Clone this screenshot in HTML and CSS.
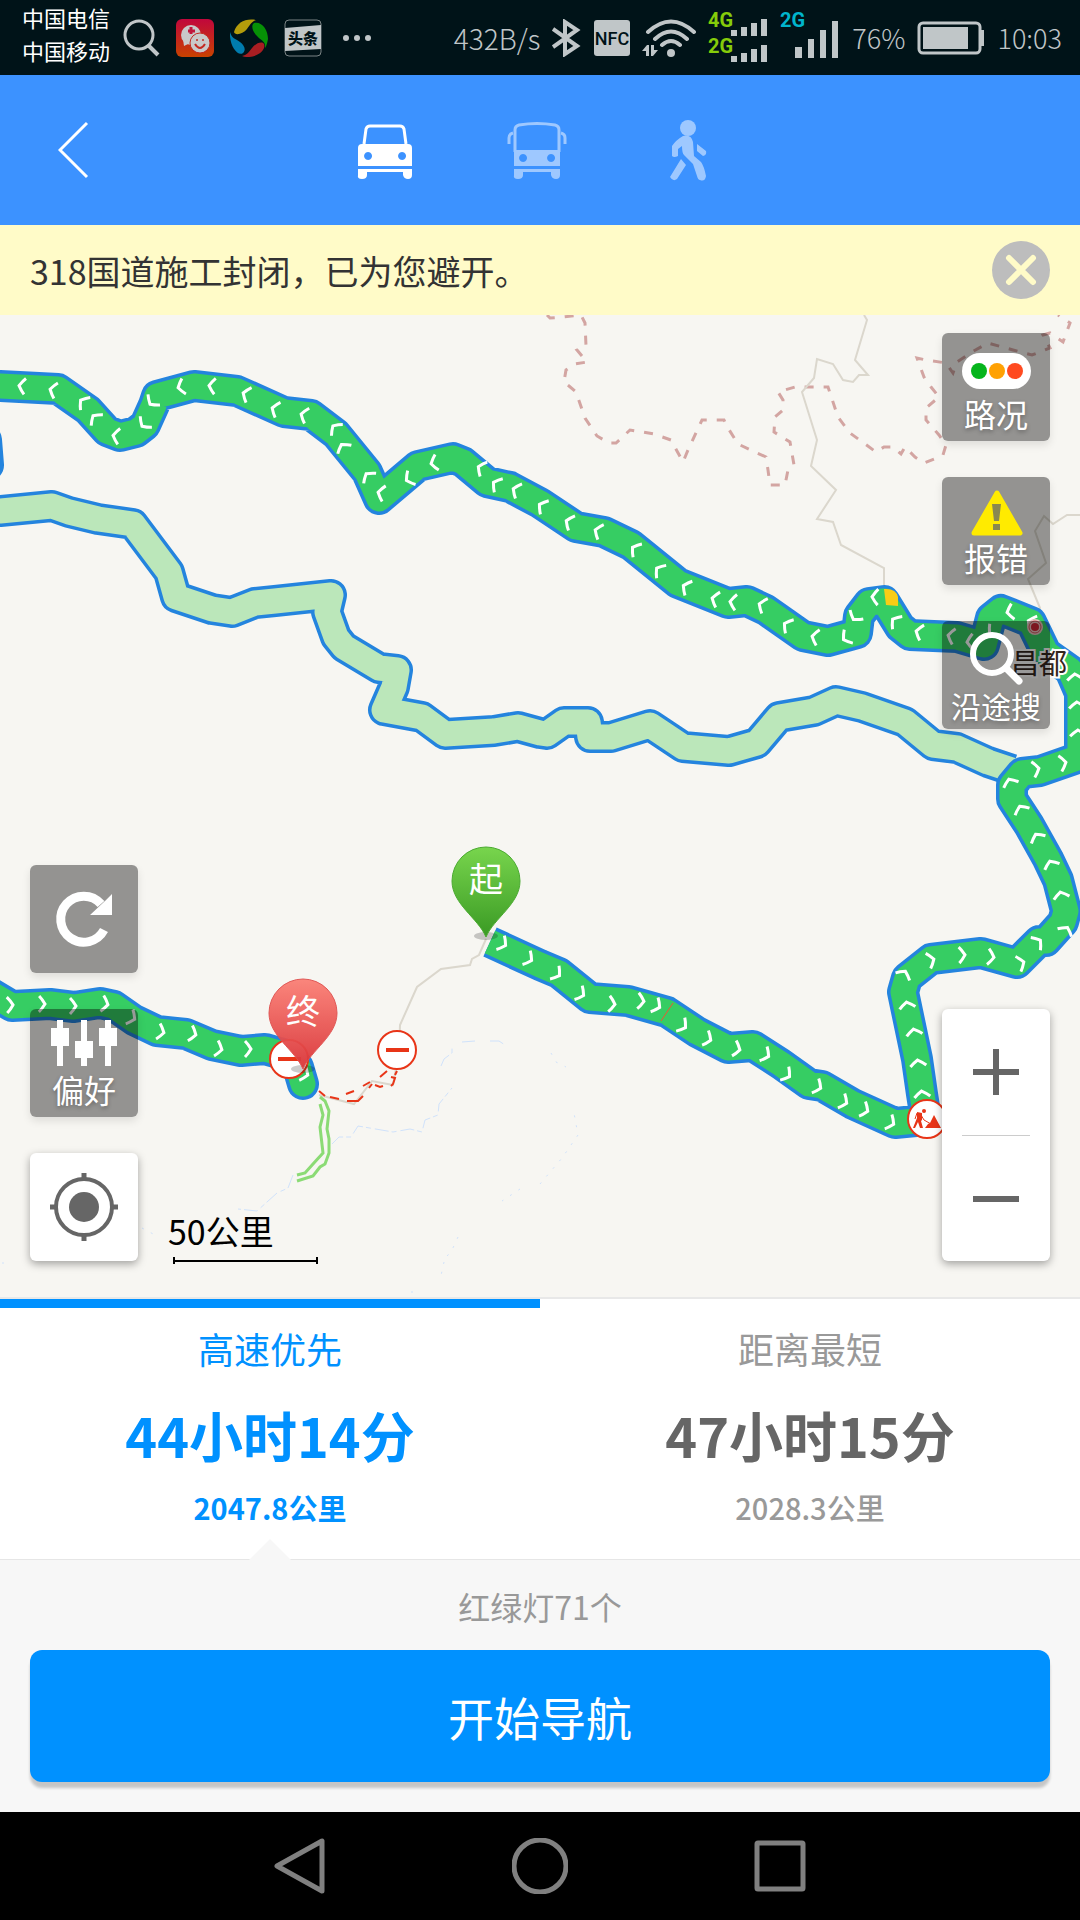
FILE: index.html
```html
<!DOCTYPE html>
<html lang="zh-CN">
<head>
    <meta charset="UTF-8">
    <meta name="viewport" content="width=device-width, initial-scale=1.0">
    <title>路线规划</title>
    <link rel="stylesheet" href="styles.css">
</head>
<body>
    <div class="status-bar">
        <div class="carriers">
            <div>中国电信</div>
            <div>中国移动</div>
        </div>
        <svg width="38" height="38" viewBox="0 0 38 38" fill="none" stroke="#c0c6c8" stroke-width="3">
            <circle cx="17" cy="16" r="14"/>
            <path d="M26 26l10 10" stroke-width="4"/>
        </svg>
        <svg width="38" height="38" viewBox="0 0 38 38">
            <defs>
                <linearGradient id="chatBg" x1="0" y1="0" x2="0" y2="1">
                    <stop offset="0" stop-color="#c1073c"/>
                    <stop offset="1" stop-color="#c84200"/>
                </linearGradient>
            </defs>
            <rect width="38" height="38" rx="6" fill="url(#chatBg)"/>
            <circle cx="15" cy="16" r="10" fill="#c9c9c9"/>
            <path d="M7 20l1 7 6-3z" fill="#c9c9c9"/>
            <path d="M15 8v7M12 12h7" stroke="#c1173c" stroke-width="3"/>
            <circle cx="24" cy="24" r="10" fill="#c9c9c9" stroke="#c32a22" stroke-width="1"/>
            <path d="M19 25q5 8 10 0" fill="none" stroke="#c32a22" stroke-width="2"/>
            <circle cx="21" cy="21" r="1" fill="#c32a22"/>
            <circle cx="27" cy="21" r="1" fill="#c32a22"/>
        </svg>
        <svg width="38" height="38" viewBox="0 0 38 38">
            <path d="M4 13C7 3 16 -1 26 1C21 3 20 6 17 10C13 15 5 17 4 13z" fill="#b39c0b"/>
            <path d="M24 4C32 2 38 11 38 20C37 25 36 28 35 29C36 22 31 22 27 17C22 12 21 6 24 4z" fill="#069106"/>
            <path d="M34 25C37 33 22 41 12 37C17 36 18 34 22 29C26 24 32 22 34 25z" fill="#a81e22"/>
            <path d="M13 34C8 38 -1 27 0 13C2 20 5 19 10 23C15 27 16 31 13 34z" fill="#007cae"/>
        </svg>
        <svg width="38" height="38" viewBox="0 0 38 38">
            <rect x="1" y="1" width="36" height="36" rx="4" fill="none" stroke="#7b8485"/>
            <path d="M1 9l36-3v24l-36 2z" fill="#c0c6c8"/>
            <text x="4" y="25" class="toutiao">头条</text>
        </svg>
        <svg width="38" height="38" viewBox="0 0 38 38" fill="#c0c6c8">
            <circle cx="8" cy="19" r="3"/>
            <circle cx="19" cy="19" r="3"/>
            <circle cx="30" cy="19" r="3"/>
        </svg>

        <span class="net-speed">432B/s</span>
        <svg width="30" height="38" viewBox="0 0 30 38" fill="none" stroke="#c0c6c8" stroke-width="4">
            <path d="M1 10l24 17-12 8V3l12 8L1 28"/>
        </svg>
        <svg width="36" height="36" viewBox="0 0 36 36">
            <rect width="36" height="36" rx="3" fill="#c0c6c8"/>
            <text x="18" y="25" text-anchor="middle" class="nfc">NFC</text>
        </svg>
        <svg width="54" height="38" viewBox="0 0 54 38" fill="none" stroke="#c0c6c8" stroke-width="4" stroke-linecap="round">
            <path d="M6 13Q29 -8 52 13M13 20Q29 5 45 20M20 26Q29 18 38 26"/>
            <circle cx="29" cy="34" r="4" fill="#c0c6c8" stroke="none"/>
            <path d="M0 32l5-6h2v11h-3v-5zM16 31l-5 6h-2v-11h3v5z" fill="#c0c6c8" stroke="none"/>
        </svg>
        <svg width="60" height="64" viewBox="0 -6 60 64">
            <text x="0" y="15" class="net four">4G</text>
            <text x="0" y="41" class="net four">2G</text>
            <path d="M23 18h6v6h-6zM33 15h6v9h-6zM43 11h6v13h-6zM53 7h6v17h-6zM23 44h6v6h-6zM33 41h6v9h-6zM43 37h6v13h-6zM53 33h6v17h-6z" fill="#c0c6c8"/>
        </svg>
        <svg width="60" height="64" viewBox="0 -6 60 64">
            <text x="0" y="15" class="net two">2G</text>
            <path d="M15 35h7v11h-7zM28 27h6v19h-6zM40 18h6v28h-6zM52 9h6v37h-6z" fill="#c0c6c8"/>
        </svg>
        <span>76%</span>
        <svg width="68" height="34" viewBox="0 0 68 34">
            <rect x="2" y="2" width="61" height="30" rx="4" fill="none" stroke="#c0c6c8" stroke-width="3"/>
            <path d="M6 6h45v22H6zM64 9h3v16h-3z" fill="#c0c6c8"/>
        </svg>
        <span>10:03</span>
    </div>

    <header class="top-bar">
        <button class="back" aria-label="返回">
            <svg width="32" height="58" viewBox="0 0 32 58" fill="none" stroke="#fff" stroke-width="3">
                <path d="M29 2L2 29l27 27"/>
            </svg>
        </button>
        <nav class="modes">
            <button class="mode active" aria-label="驾车">
                <svg width="60" height="60" viewBox="0 0 60 60" fill="#fff">
                    <path d="M9 24l2-15q1-3 4-3h30q3 0 4 3l2 15" fill="none" stroke="#fff" stroke-width="3"/>
                    <path fill-rule="evenodd" d="M7 24h46q4 0 4 4v18H3V28q0-4 4-4zM13 32a4 4 0 1 0 0.1 0zM47 32a4 4 0 1 0 0.1 0z"/>
                    <path d="M3 49h54v6q0 4-4 4t-5-4v-3H12v3q0 4-5 4t-4-4z"/>
                </svg>
            </button>
            <button class="mode" aria-label="公交">
                <svg width="60" height="60" viewBox="0 0 60 60" fill="#fff">
                    <path d="M8 32V10q0-4 4-5q18-3 36 0q4 1 4 5v22" fill="none" stroke="#fff" stroke-width="3"/>
                    <path d="M2 24v-6q0-4 4-5M58 24v-6q0-4-4-5" fill="none" stroke="#fff" stroke-width="3"/>
                    <path fill-rule="evenodd" d="M7 30h46v16H7zM16 34a4 4 0 1 0 0.1 0zM44 34a4 4 0 1 0 0.1 0z"/>
                    <path d="M7 49h46v6q0 4-4 4t-5-4v-3H16v3q0 4-5 4t-4-4z"/>
                </svg>
            </button>
            <button class="mode" aria-label="步行">
                <svg width="60" height="62" viewBox="0 0 60 62" fill="#fff">
                    <circle cx="29" cy="9" r="8"/>
                    <path d="M24 17q8-2 10 6l1 14 7 6q3 4 5 14q-1 6-6 4q-2 0-3-4l-4-12-9-9q-2-2-2-9l-4 3v7q-4 2-6 0V27q4-6 11-10z"/>
                    <path d="M38 25l9 7q1 4-3 5l-6-5zM22 40l5 6-9 14q-4 3-7-2z"/>
                </svg>
            </button>
        </nav>
    </header>

    <div class="notice">
        <span>318国道施工封闭，已为您避开。</span>
        <button aria-label="关闭">
            <svg width="58" height="58" viewBox="0 0 58 58">
                <circle cx="29" cy="29" r="29" fill="#bdbdbd"/>
                <path d="M17 17l24 24M41 17L17 41" stroke="#fffbc8" stroke-width="6" stroke-linecap="round"/>
            </svg>
        </button>
    </div>

    <main class="map">
        <svg class="map-canvas" viewBox="0 315 1080 982" preserveAspectRatio="xMidYMid slice" fill="none">
            <defs>
                <marker id="chevron" viewBox="-8 -10 16 20" markerWidth="16" markerHeight="20" markerUnits="userSpaceOnUse" orient="auto">
                    <path d="M-3 -8Q0 -5 3 0Q0 5 -3 8" fill="none" stroke="#fff" stroke-width="3"/>
                </marker>
                <linearGradient id="startFill" x1="0" y1="0" x2="0" y2="1">
                    <stop offset="0" stop-color="#78d54d"/>
                    <stop offset="1" stop-color="#3a9a24"/>
                </linearGradient>
                <linearGradient id="endFill" x1="0" y1="0" x2="0" y2="1">
                    <stop offset="0" stop-color="#fb8076"/>
                    <stop offset="1" stop-color="#da3438"/>
                </linearGradient>
                <path id="pin" d="M0 0C-8 -19 -34 -33 -34 -56A34 34 0 0 1 34 -56C34 -33 8 -19 0 0z"/>
                <path id="altRoute" d="M-20 512L0 511L52 506L69 512L98 519L133 524L169 572L176 597L212 609L232 612L255 603L275 601L331 595L327 612L336 637L344 647L379 668L397 670L394 687L384 710L422 717L445 734L494 731L518 727L540 733L547 734L564 722L588 722L590 737L611 737L650 725L683 747L729 751L757 743L779 717L814 711L836 701L862 707L905 722L933 745L957 748L988 762L1012 770"/>
                <path id="mainRoute" d="M490 942L540 965L559 973L590 998L628 1001L667 1012L697 1032L728 1048L753 1046L781 1064L809 1084L822 1086L853 1104L895 1123L926 1120L922 1094L917 1059L903 992L907 978L931 959L981 953L1017 963L1039 941L1046 941L1063 922L1066 911L1058 880L1048 859L1029 825L1012 799L1012 785L1022 773L1040 771L1080 757L1080 723L1080 693L1070 670L1046 653L1031 622L1001 610L991 618L984 645L957 637L910 635L900 627L884 601L869 603L859 616L857 633L828 641L803 636L766 610L747 601L728 603L678 583L631 545L604 532L576 527L540 503L510 487L487 482L463 462L453 458L418 466L379 499L367 472L336 434L311 415L284 412L237 391L194 386L157 396L154 405L145 425L136 432L120 436L107 431L88 410L58 389L0 386L-20 386"/>
                <path id="tailRoute" d="M-10 993L12 1006L50 1004L74 1007L100 1003L114 1006L134 1020L157 1031L186 1034L212 1045L241 1051L265 1049L286 1055L298 1067L303 1084"/>
            </defs>

            <!-- rivers -->
            <g stroke="#d0e2fb" stroke-width="1" stroke-dasharray="14 3 5 4">
                <path d="M293 1175l-5 13-11 5-20 18-19-2"/>
                <path d="M332 1144l7-7h12l7-11 35 6 17-3 12 3 3-12 13-5 1-11 13-16"/>
                <path d="M441 1066l3-7 8-6v-6M462 1042l13-1M490 1041h9l6 4"/>
            </g>
            <g stroke="#d0e2fb" stroke-width="1" stroke-dasharray="2 8">
                <path d="M540 1184l22-26 16-23-4-22M551 1053l5 9 10 5M520 1189l-18 12M458 1237l-6 13-8 10M444 1262l-4 18M412 1291v6M142 1228l15 8M2 1263h6"/>
            </g>

            <!-- province border -->
            <path stroke="#d3a5a2" stroke-width="3" stroke-dasharray="9 10" d="M547 315l3 3 13-1 18-2 4 8 1 23-9 4 10 12-12 2-9 6-2 12 5 4 7 6 9 26 12 18 12 7h7l14-13 24 4 17 6 12 22 5-12 14-30h22l4 8 10 16 19 9 9 4 2 13 2 15h15l3-15 6-5-4-23-16-10 1-15 8-7v-10l-5-8 17-5h33l10 30 12 16 26 19 8-5h9l8 7 4-7 10 10 9 6 10-4 9-4 3-10-7-10-13-15v-12l13-11-8-10-7-10-7-19 9 2 20 3 7 10 4-11 15-10 16-9 25 7 19 5 18-7-7-13 7-2 13 9 7-19-12-8"/>

            <!-- minor roads -->
            <g stroke="#dbd7cd" stroke-width="2">
                <path d="M864 315l3 5-12 40 13 15h-9l-6 7-10-2-10-16-16-5-3 19-12 14 15 48-6 26 25 24-19 29 16 3 8 23 43 23v30"/>
                <path d="M1080 515h-13l-14 9-9-8-9 15 11 32-18 16 12 29-1 10"/>
                <path d="M486 939l-7 16-7 4-2 6-29 4-24 18-17 38-1 27-6 33-21-4-18 23-35-9"/>
            </g>

            <g stroke="#e83518" stroke-width="2">
                <path d="M319 1091l6 5M330 1097l9 2M347 1101h11l5-5M369 1088l3-4M375 1085l5 2 3-1M391 1086l2-2 2-6-4-1M395 1075l2-4"/>
                <path d="M346 1094l8-3M363 1086l7-4M380 1077l7-6"/>
            </g>
            <g stroke="#8bdb75" stroke-width="3">
                <path d="M320 1097l5 4 4 10-2 18 2 10v14l-4 11-5 3-7 9-16 5"/>
                <path d="M320 1104l3 11-3 12 3 26-10 11-8 9-8 2"/>
            </g>

            <g stroke-linejoin="round">
                <path d="M-14 440L-12 465" stroke="#2484de" stroke-width="32" stroke-linecap="round"/>
                <use href="#altRoute" stroke="#2484de" stroke-width="32"/>
                <use href="#altRoute" stroke="#bbe7ba" stroke-width="25"/>
                <use href="#mainRoute" stroke="#2484de" stroke-width="32"/>
                <use href="#tailRoute" stroke="#2484de" stroke-width="32" stroke-linecap="round"/>
                <use href="#mainRoute" stroke="#36cd63" stroke-width="25"/>
                <use href="#tailRoute" stroke="#36cd63" stroke-width="25" stroke-linecap="round"/>
            </g>
            <path d="M884 589q12-1 14 8v9l-12-1z" fill="#f9cd15"/>
            <path d="M673 1003l-12 18" stroke="#ee5533" stroke-width="1"/>

            <!-- direction arrows along the route -->
            <g class="arrows">
                <polyline points="503,944 529,959 557,974 581,994 612,1004 641,1001 657,1006 683,1026 708,1039 737,1049 766,1055 787,1075 818,1087 844,1102 865,1110 891,1123"/>
                <polyline points="922,1094 918,1063 914,1032 907,1005 904,974 931,960 962,955 991,957 1021,963 1038,942 1066,930 1061,895 1051,864 1037,837 1021,809 1010,782"/>
                <polyline points="1036,769 1063,763"/>
                <polyline points="1078,733 1077,705 1075,677"/>
                <polyline points="1031,622 1010,612 992,632 970,642 951,636 919,632 895,621 875,597 855,617 846,638 815,637 787,625 762,605 733,602 715,599 686,587 659,570 635,549 598,531 569,522 542,506 516,490 496,484 481,468 434,463 409,479 381,493 368,476 343,447 335,428 304,415 275,409 246,394 212,386 181,387 152,402 144,424 116,436 95,418 83,402 53,390 22,386"/>
                <polyline points="10,1005 42,1004 73,1006 105,1004 132,1018 161,1032 193,1034 219,1049 248,1049"/>
                <polyline points="290,1068 305,1074"/>
            </g>

            <!-- city -->
            <circle cx="1035" cy="627" r="8" fill="#eac4c0"/>
            <circle cx="1035" cy="627" r="6" fill="none" stroke="#d0555c" stroke-width="1"/>
            <circle cx="1035" cy="627" r="4" fill="#cf2734"/>
            <text x="1011" y="674" class="city">昌都</text>

            <!-- closed roads and works -->
            <g fill="#fff" stroke="#e83518" stroke-width="2">
                <circle cx="397" cy="1050" r="19"/>
                <circle cx="289" cy="1059" r="19"/>
                <circle cx="927" cy="1119" r="19"/>
                <path d="M386 1050h23M278 1059h23" stroke-width="4"/>
            </g>
            <g fill="#e83518">
                <path d="M925 1128l3-4 2-1 4-8 7 13z"/>
                <circle cx="924" cy="1111" r="2"/>
                <path d="M917 1112l5 1 0 7-1 1 2 7h-3l-2-6-3 6h-2l4-10z"/>
                <path d="M921 1115l3 5 7 4M917 1113l-2 6" fill="none" stroke="#e83518" stroke-width="1"/>
            </g>

            <!-- start and end pins -->
            <ellipse cx="486" cy="936" rx="12" ry="4" fill="#000" opacity=".2"/>
            <g transform="translate(486 937)">
                <use href="#pin" fill="url(#startFill)" stroke="#4bab31" stroke-width="1"/>
                <text x="0" y="-45" class="pin-text">起</text>
            </g>
            <ellipse cx="303" cy="1069" rx="12" ry="4" fill="#000" opacity=".2"/>
            <g transform="translate(303 1069)" opacity=".95">
                <use href="#pin" fill="url(#endFill)" stroke="#e0504e" stroke-width="1"/>
                <text x="0" y="-45" class="pin-text">终</text>
            </g>
        </svg>

        <div class="tools tools-right">
            <button class="tool">
                <svg viewBox="0 0 108 64">
                    <rect x="20" y="20" width="69" height="36" rx="18" fill="#fff"/>
                    <circle cx="37" cy="38" r="8" fill="#06b51c"/>
                    <circle cx="55" cy="38" r="8" fill="#ffa103"/>
                    <circle cx="73" cy="38" r="8" fill="#ff4a20"/>
                </svg>
                <span>路况</span>
            </button>
            <button class="tool">
                <svg viewBox="0 0 108 64">
                    <path d="M55 16L78 56H32z" fill="#ffeb00" stroke="#ffeb00" stroke-width="5" stroke-linejoin="round"/>
                    <path d="M50 27h9l-2 17h-5zM51 47h7v6h-7z" fill="#8a8850"/>
                </svg>
                <span>报错</span>
            </button>
            <button class="tool">
                <svg viewBox="0 0 108 64" fill="none" stroke="#fff">
                    <circle cx="50" cy="33" r="19" stroke-width="6"/>
                    <path d="M64 47l13 13" stroke-width="7" stroke-linecap="round"/>
                </svg>
                <span class="small">沿途搜</span>
            </button>
        </div>

        <div class="tools tools-left">
            <button class="tool" aria-label="刷新">
                <svg class="full" viewBox="0 0 108 108">
                    <path d="M71 39A23 23 0 1 0 74 65" fill="none" stroke="#fff" stroke-width="9"/>
                    <path d="M82 29v21H60l15-14z" fill="#fff"/>
                </svg>
            </button>
            <button class="tool">
                <svg viewBox="0 0 108 64" fill="#fff">
                    <path d="M27 11h6v46h-6zM51 11h6v46h-6zM75 11h6v46h-6zM21 19h18v18H21zM45 32h18v17H45zM69 19h18v18H69z"/>
                </svg>
                <span>偏好</span>
            </button>
            <button class="tool light" aria-label="定位">
                <svg class="full" viewBox="0 0 108 108" fill="none" stroke="#666" stroke-width="4">
                    <circle cx="54" cy="54" r="28"/>
                    <circle cx="54" cy="54" r="15" fill="#666" stroke="none"/>
                    <path d="M54 20v6M54 82v6M20 54h6M82 54h6" stroke-width="5"/>
                </svg>
            </button>
        </div>

        <div class="zoom">
            <button aria-label="放大">
                <svg width="46" height="46" viewBox="0 0 46 46"><path d="M0 20h46v6H0zM20 0h6v46h-6z" fill="#666"/></svg>
            </button>
            <button aria-label="缩小">
                <svg width="46" height="46" viewBox="0 0 46 46"><path d="M0 20h46v6H0z" fill="#666"/></svg>
            </button>
        </div>

        <div class="scale">
            <span>50公里</span>
            <div class="scale-line"></div>
        </div>
    </main>

    <div class="routes">
        <button class="route selected">
            <span class="name">高速优先</span>
            <span class="time">44小时14分</span>
            <span class="distance">2047.8公里</span>
        </button>
        <button class="route">
            <span class="name">距离最短</span>
            <span class="time">47小时15分</span>
            <span class="distance">2028.3公里</span>
        </button>
    </div>

    <div class="start-panel">
        <p>红绿灯71个</p>
        <button class="start">开始导航</button>
    </div>

    <div class="nav-bar">
        <button aria-label="后退">
            <svg width="54" height="56" viewBox="0 0 54 56"><path d="M49 3v50L4 28z"/></svg>
        </button>
        <button aria-label="主页">
            <svg width="56" height="56" viewBox="0 0 56 56"><circle cx="28" cy="28" r="26"/></svg>
        </button>
        <button aria-label="最近任务">
            <svg width="56" height="56" viewBox="0 0 56 56"><rect x="5" y="5" width="46" height="46" rx="1"/></svg>
        </button>
    </div>
</body>
</html>
```
FILE: styles.css
```css
* {
    box-sizing: border-box;
}
body {
    margin: 0;
    min-height: 100vh;
    display: flex;
    flex-direction: column;
    font-family: "Noto Sans CJK SC", sans-serif;
    background: #f7f7f7;
}
button {
    border: none;
    background: none;
    padding: 0;
    font-family: inherit;
    cursor: pointer;
}
svg {
    display: block;
    flex-shrink: 0;
}

/* status bar */
.status-bar {
    height: 75px;
    display: flex;
    align-items: center;
    gap: 12px;
    padding: 0 18px 0 22px;
    background: #001318;
    color: #c0c6c8;
    font-size: 27px;
    font-weight: 300;
    white-space: nowrap;
}
.carriers {
    font-size: 22px;
    font-weight: 400;
    line-height: 33px;
    color: #fff;
    padding-bottom: 8px;
}
.status-bar > svg:nth-of-type(-n+4) { margin-right: 4px; }
.net-speed { font-size: 28px; margin-left: auto; }
.toutiao { font-size: 15px; font-weight: 900; fill: #001318; }
.nfc { font-family: Roboto, sans-serif; font-size: 18px; font-weight: 500; fill: #001318; }
.net { font-family: Roboto, sans-serif; font-size: 20px; font-weight: 700; }
.four { fill: #85cc0a; }
.two { fill: #00b5cc; }

/* header */
.top-bar {
    height: 150px;
    display: grid;
    grid-template-columns: 1fr auto 1fr;
    align-items: center;
    background: #3c92ff;
}
.back { justify-self: start; padding: 30px 58px; }
.modes { display: flex; padding-right: 6px; }
.mode {
    width: 152px;
    height: 150px;
    display: flex;
    justify-content: center;
    align-items: center;
    opacity: .5;
}
.mode.active { opacity: 1; }

.notice {
    min-height: 90px;
    display: flex;
    justify-content: space-between;
    align-items: center;
    padding: 0 30px;
    background: #fffbc8;
    color: #333;
    font-size: 34px;
}

/* map */
.map {
    position: relative;
    flex: 1;
    min-height: 860px;
    overflow: hidden;
    background: #f7f6f2;
}
.map-canvas {
    position: absolute;
    inset: 0;
    width: 100%;
    height: 100%;
}
.arrows polyline {
    marker-start: url(#chevron);
    marker-mid: url(#chevron);
    marker-end: url(#chevron);
}
.city {
    font-size: 28px;
    fill: #33261c;
    stroke: #fff;
    stroke-width: 4px;
    paint-order: stroke;
}
.pin-text { font-size: 34px; fill: #fff; text-anchor: middle; }

.tools {
    position: absolute;
    display: flex;
    flex-direction: column;
    gap: 36px;
}
.tools-right { right: 30px; top: 18px; }
.tools-left { left: 30px; bottom: 36px; }
.tool {
    width: 108px;
    height: 108px;
    padding-bottom: 4px;
    border-radius: 6px;
    background: rgba(0, 0, 0, .4);
    box-shadow: 0 4px 8px rgba(0, 0, 0, .1);
    color: #fff;
    font-size: 32px;
    line-height: 32px;
    text-shadow: 0 2px 4px rgba(0, 0, 0, .3);
    display: flex;
    flex-direction: column;
    align-items: center;
}
.tool svg { width: 108px; height: 64px; }
.tool .full { height: 108px; }
.tool .small { font-size: 30px; line-height: 40px; }
.tool.light, .zoom {
    background: #fff;
    box-shadow: 0 3px 8px rgba(0, 0, 0, .35);
}
.zoom {
    position: absolute;
    right: 30px;
    bottom: 36px;
    width: 108px;
    border-radius: 6px;
}
.zoom button {
    width: 68px;
    height: 126px;
    margin: 0 20px;
    display: flex;
    justify-content: center;
    align-items: center;
}
.zoom button + button { border-top: 1px solid #ccc; }
.scale {
    position: absolute;
    left: 168px;
    bottom: 33px;
    font-size: 34px;
    line-height: 40px;
    color: #000;
}
.scale-line {
    width: 145px;
    height: 7px;
    margin: 6px 0 0 5px;
    border: solid #000;
    border-width: 0 2px;
    background: linear-gradient(#000, #000) center / 100% 2px no-repeat;
}

/* route choices */
.routes {
    display: grid;
    grid-template-columns: 1fr 1fr;
    border-top: 2px solid #e8e8e8;
    background: #fff;
}
.route {
    position: relative;
    display: flex;
    flex-direction: column;
    align-items: center;
    padding: 16px 0 32px;
    border-top: 9px solid transparent;
    color: #999;
}
.route .name { font-size: 36px; line-height: 48px; }
.route .time {
    font-size: 54px;
    font-weight: 700;
    line-height: 80px;
    margin: 23px 0 12px;
    color: #666;
}
.route .distance { font-size: 29px; font-weight: 500; line-height: 40px; }
.route.selected { border-color: #0091ff; color: #0091ff; }
.route.selected .time { color: #0091ff; }
.route.selected .distance { font-weight: 700; }
.route.selected::after {
    content: "";
    position: absolute;
    bottom: -1px;
    left: 50%;
    margin-left: -21px;
    border: 21px solid transparent;
    border-top: 0;
    border-bottom-color: #f7f7f7;
}

.start-panel {
    border-top: 1px solid #e6e6e6;
    padding: 22px 30px 30px;
    text-align: center;
}
.start-panel p {
    margin: 0 0 20px;
    font-size: 32px;
    line-height: 48px;
    color: #999;
}
.start {
    display: block;
    width: 100%;
    height: 132px;
    border-radius: 12px;
    background: #0091ff;
    box-shadow: 0 6px 3px rgba(0, 0, 0, .2);
    color: #fff;
    font-size: 46px;
}

.nav-bar {
    height: 108px;
    display: flex;
    justify-content: center;
    background: #000;
}
.nav-bar button {
    width: 240px;
    display: flex;
    justify-content: center;
    align-items: center;
}
.nav-bar svg {
    fill: none;
    stroke: #808080;
    stroke-width: 5;
    stroke-linejoin: round;
}
```
